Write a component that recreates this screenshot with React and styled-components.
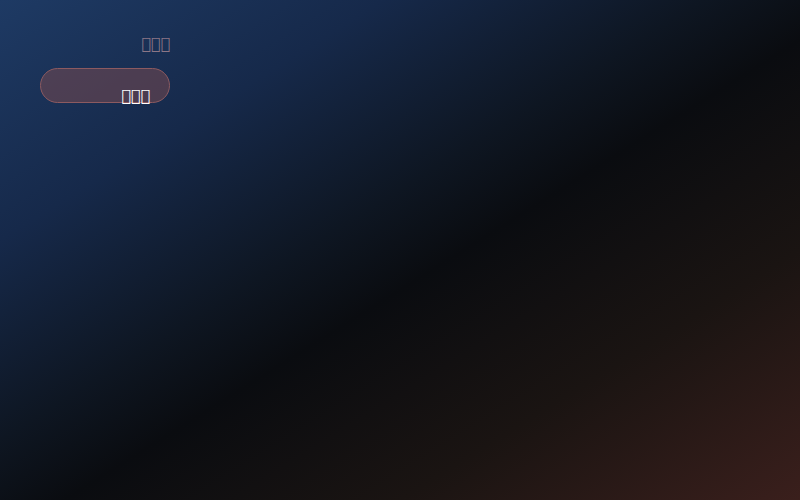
import React from "react";
import styled, { createGlobalStyle } from "styled-components";

const Global = createGlobalStyle`
  html, body { margin: 0; padding: 0; }
  body {
    width: 800px;
    height: 500px;
    overflow: hidden;
    font-family: "DejaVu Sans", sans-serif;
  }
`;

const Page = styled.div`
  width: 800px;
  height: 500px;
  box-sizing: border-box;
  padding: 34px 0 0 40px;
  background: linear-gradient(
    to bottom right,
    #1e3a64 0%,
    #16294a 24%,
    #0e1622 44%,
    #0a0c10 54%,
    #1a1412 75%,
    #3a1f1c 100%
  );
`;

const Panel = styled.div`
  width: 130px;
  display: flex;
  flex-direction: column;
  align-items: flex-end;
  gap: 14px;
`;

const Label = styled.div`
  font-size: 16px;
  line-height: 20px;
  color: #8c7686;
`;

const Pill = styled.button`
  width: 130px;
  height: 35px;
  box-sizing: border-box;
  border-radius: 18px;
  border: 1px solid #8c5a60;
  background: rgba(140, 80, 80, 0.45);
  color: #ffffff;
  font-family: "DejaVu Sans", sans-serif;
  font-size: 16px;
  line-height: 12px;
  display: flex;
  align-items: flex-end;
  justify-content: flex-end;
  padding: 0 19px 0 0;
  cursor: pointer;
`;

export default function App() {
  return (
    <>
      <Global />
      <Page>
        <Panel>
          <Label>{"\uE000\uE001\uE002"}</Label>
          <Pill>{"\uE003\uE004\uE005"}</Pill>
        </Panel>
      </Page>
    </>
  );
}
